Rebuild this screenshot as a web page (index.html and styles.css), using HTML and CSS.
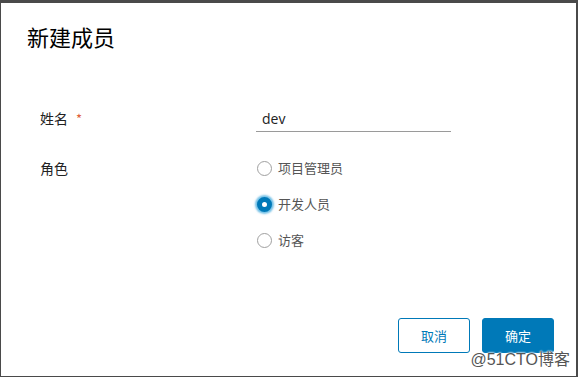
FILE: index.html
```html
<!DOCTYPE html>
<html lang="zh-CN">
<head>
<meta charset="utf-8">
<title>新建成员</title>
<link rel="stylesheet" href="styles.css">
</head>
<body>
<div class="modal">
  <h1 class="title">新建成员</h1>
  <div class="form">
    <div class="row name-row">
      <label class="label">姓名<span class="req">*</span></label>
      <div class="control">
        <input class="input" type="text" value="dev">
      </div>
    </div>
    <div class="row role-row">
      <label class="label">角色</label>
      <div class="control radios">
        <div class="radio"><span class="dot"></span><span class="rtext">项目管理员</span></div>
        <div class="radio checked"><span class="dot"></span><span class="rtext">开发人员</span></div>
        <div class="radio"><span class="dot"></span><span class="rtext">访客</span></div>
      </div>
    </div>
  </div>
  <div class="footer">
    <button class="btn btn-outline">取消</button>
    <button class="btn btn-primary">确定</button>
  </div>
  <div class="watermark">@51CTO博客</div>
</div>
</body>
</html>
```

FILE: styles.css
```css
html, body {
  margin: 0;
  padding: 0;
  height: 100%;
}
body {
  background: #4a4a4a;
  padding: 3px 2px 1px 1px;
  box-sizing: border-box;
  font-family: "Noto Sans CJK SC", "Noto Sans", sans-serif;
}
.modal {
  position: relative;
  background: #fff;
  height: 100%;
  box-sizing: border-box;
  padding: 19px 22px 0 26px;
  display: flex;
  flex-direction: column;
}
.title {
  margin: 0;
  font-size: 22px;
  line-height: 28px;
  font-weight: 400;
  color: #000;
}
.form {
  margin-top: 56px;
  padding-left: 13px;
  display: flex;
  flex-direction: column;
  gap: 18px;
}
.row {
  display: grid;
  grid-template-columns: 216px 1fr;
  align-items: start;
}
.label {
  font-size: 14px;
  line-height: 24px;
  color: #222;
}
.role-row .label {
  line-height: 36px;
}
.req {
  color: #e0603a;
  font-size: 13px;
  margin-left: 8px;
}
.input {
  display: block;
  width: 195px;
  height: 26px;
  box-sizing: border-box;
  border: 0;
  border-bottom: 1px solid #9a9a9a;
  padding: 0 0 1px 6px;
  font-family: "Open Sans", "Noto Sans", sans-serif;
  font-size: 14px;
  color: #222;
  outline: none;
  background: transparent;
}
.radios {
  display: flex;
  flex-direction: column;
}
.radio {
  display: flex;
  align-items: center;
  height: 36px;
  padding-left: 1px;
}
.dot {
  width: 15px;
  height: 15px;
  box-sizing: border-box;
  border-radius: 50%;
  border: 1px solid #a0a0a0;
  background: #fff;
  margin-right: 6px;
  flex: none;
}
.checked .dot {
  border: 5px solid #0079b8;
  background: #fff;
  box-shadow: 0 0 2px 2px rgba(0, 140, 210, 0.55);
}
.rtext {
  font-size: 13px;
  line-height: 18px;
  color: #555;
}
.footer {
  margin-top: 60px;
  display: flex;
  justify-content: flex-end;
  gap: 12px;
}
.btn {
  width: 72px;
  height: 35px;
  box-sizing: border-box;
  border-radius: 3px;
  font-family: "Noto Sans CJK SC", sans-serif;
  font-size: 13px;
  padding: 0;
  cursor: pointer;
}
.btn-outline {
  background: #fff;
  border: 1px solid #0079b8;
  color: #0079b8;
}
.btn-primary {
  background: #0079b8;
  border: 1px solid #0079b8;
  color: #fff;
}
.watermark {
  position: absolute;
  right: 6px;
  bottom: 7px;
  font-family: "Liberation Sans", "Noto Sans CJK SC", sans-serif;
  font-size: 16px;
  line-height: 18px;
  color: #555;
  text-shadow: 0 0 2px #fff, 0 0 2px #fff, 0 0 2px #fff;
}
```
